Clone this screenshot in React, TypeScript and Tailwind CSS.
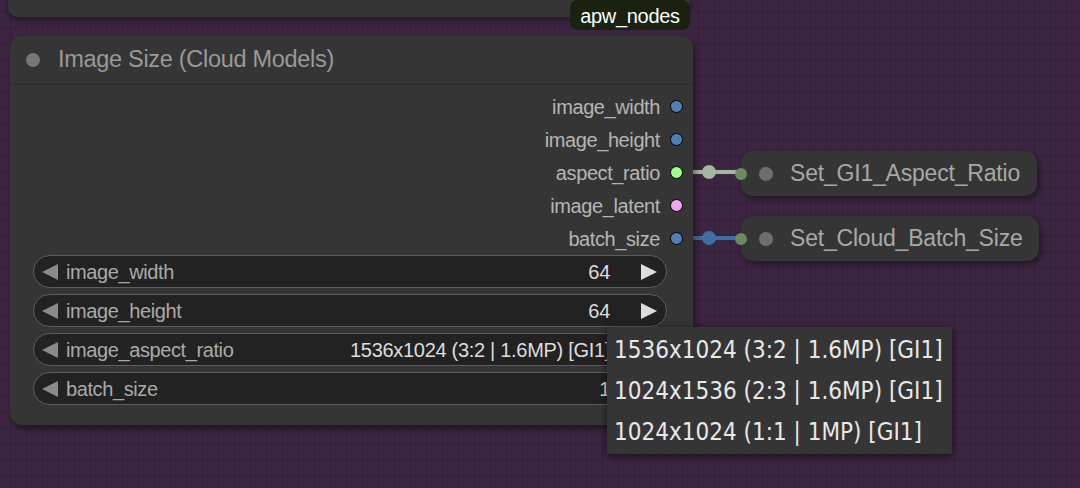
import React from 'react';

const font = { fontFamily: '"Liberation Sans", Arial, sans-serif' };

const outputs = [
  { name: 'image_width', color: 'bg-[#4f7fb3]' },
  { name: 'image_height', color: 'bg-[#4f7fb3]' },
  { name: 'aspect_ratio', color: 'bg-[#9bff8a]' },
  { name: 'image_latent', color: 'bg-[#f0a4ee]' },
  { name: 'batch_size', color: 'bg-[#4f7fb3]' },
];

const widgets = [
  { name: 'image_width', value: '64', arrow: true },
  { name: 'image_height', value: '64', arrow: true },
  { name: 'image_aspect_ratio', value: '1536x1024 (3:2 | 1.6MP) [GI1]', arrow: false },
  { name: 'batch_size', value: '1', arrow: false },
];

const options = ['1536x1024 (3:2 | 1.6MP) [GI1]', '1024x1536 (2:3 | 1.6MP) [GI1]', '1024x1024 (1:1 | 1MP) [GI1]'];

const Widget: React.FC<{ name: string; value: string; arrow: boolean }> = ({ name, value, arrow }) => (
  <div className="flex h-[33px] items-center rounded-full border border-[#5e5e5e] bg-[#222222] pl-[8px] pr-[9px] text-[20px]">
    <svg width="16" height="16" viewBox="0 0 16 16" className="mr-[8px] shrink-0">
      <polygon points="16,0 16,16 0,8" fill="#8a8a8a" />
    </svg>
    <span className="flex-1 tracking-[-0.4px] text-[#aaaaaa]">{name}</span>
    <span className="tracking-[-0.3px] text-[#dddddd]">{value}</span>
    <svg width="16" height="16" viewBox="0 0 16 16" className="ml-[31px] shrink-0">
      {arrow && <polygon points="0,0 16,8 0,16" fill="#dddddd" />}
    </svg>
  </div>
);

const SetNode: React.FC<{ label: string; top: string; width: string }> = ({ label, top, width }) => (
  <div className={`absolute left-[741px] ${top} ${width} flex h-[45px] items-center rounded-[12px] bg-[#353535] shadow-[2px_3px_6px_rgba(0,0,0,0.45)]`}>
    <span className="-ml-[6px] h-[12px] w-[12px] rounded-full bg-[#6c8a62]" />
    <span className="ml-[12px] h-[14px] w-[14px] rounded-full bg-[#6e6e6e]" />
    <span className="ml-[17px] text-[23px] tracking-[-0.2px] text-[#a8a8a8]">{label}</span>
  </div>
);

export default function App() {
  return (
    <div
      style={font}
      className="relative h-[488px] w-[1080px] overflow-hidden bg-[#3c2540] bg-[image:linear-gradient(to_right,rgba(0,0,0,0.13)_1px,transparent_1px),linear-gradient(to_bottom,rgba(0,0,0,0.13)_1px,transparent_1px)] bg-[size:16px_16px] bg-[position:10px_11px]"
    >
      {/* previous node, mostly off screen */}
      <div className="absolute left-[8px] top-[-40px] h-[57px] w-[682px] rounded-[10px] bg-[#353535] shadow-[0_3px_6px_rgba(0,0,0,0.4)]" />
      <div className="absolute left-[570px] top-[0px] flex h-[30px] w-[120px] items-center justify-center rounded-[8px] bg-[#18220f] pt-[1px] text-[20px] tracking-[-0.3px] text-white">
        apw_nodes
      </div>

      {/* links */}
      <svg className="absolute left-0 top-0" width="1080" height="488">
        <line x1="683" y1="172" x2="741" y2="172" stroke="#a4b5a0" strokeWidth="4" />
        <circle cx="709" cy="172" r="7" fill="#a4b5a0" />
        <line x1="683" y1="238" x2="741" y2="238" stroke="#3e6fa3" strokeWidth="4" />
        <circle cx="709" cy="238" r="7" fill="#3e6fa3" />
      </svg>

      {/* main node */}
      <div className="absolute left-[10px] top-[36px] flex h-[389px] w-[683px] flex-col rounded-[12px] bg-[#353535] shadow-[2px_4px_6px_rgba(0,0,0,0.45)]">
        <div className="flex h-[49px] items-center border-b border-[#2c2c2c] pl-[16px]">
          <span className="h-[14px] w-[14px] rounded-full bg-[#777777]" />
          <span className="ml-[18px] text-[23.5px] tracking-[-0.3px] text-[#999999]">Image Size (Cloud Models)</span>
        </div>
        <div className="flex flex-col pt-[5px]">
          {outputs.map((o) => (
            <div key={o.name} className="flex h-[33px] items-center justify-end gap-[10px] pr-[10px]">
              <span className="text-[20px] tracking-[-0.4px] text-[#b5b5b5]">{o.name}</span>
              <span className={`h-[13px] w-[13px] rounded-full border-[1.5px] border-black ${o.color}`} />
            </div>
          ))}
        </div>
        <div className="flex flex-col gap-[6px] pl-[23px] pr-[26px]">
          {widgets.map((w) => (
            <Widget key={w.name} {...w} />
          ))}
        </div>
      </div>

      <SetNode label="Set_GI1_Aspect_Ratio" top="top-[151px]" width="w-[296px]" />
      <SetNode label="Set_Cloud_Batch_Size" top="top-[216px]" width="w-[298px]" />

      {/* dropdown */}
      <div className="absolute left-[607px] top-[327px] flex w-[345px] flex-col bg-[#353535] py-[2px] shadow-[0_2px_8px_rgba(0,0,0,0.6)]">
        {options.map((opt) => (
          <div key={opt} className="flex h-[41px] items-center pl-[7px] pt-[1px] text-[24px] text-[#e8e8e8]" style={{ fontFamily: '"DejaVu Sans Condensed", "Liberation Sans", sans-serif' }}>
            {opt}
          </div>
        ))}
      </div>
    </div>
  );
}
